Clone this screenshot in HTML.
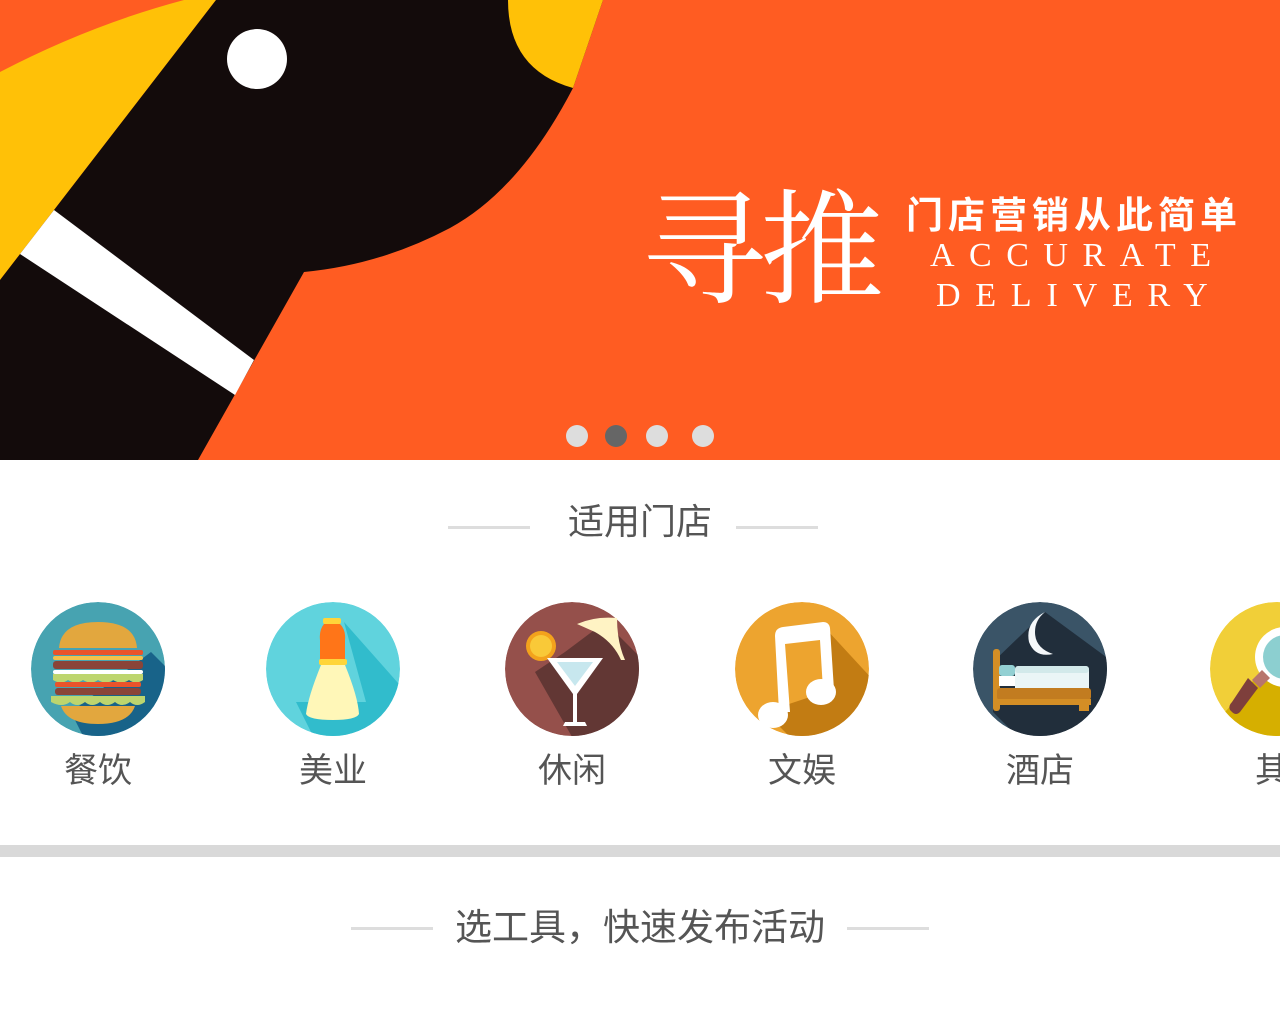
<!DOCTYPE html>
<html><head><meta charset="utf-8"><style>
*{margin:0;padding:0;box-sizing:border-box}
body{width:1280px;height:1024px;background:#fff;position:relative;overflow:hidden;font-family:"Liberation Sans","Noto Sans CJK SC",sans-serif}
.abs{position:absolute}
.t{position:absolute;white-space:nowrap;color:#fff}
.title{position:absolute;left:0;width:1280px;text-align:center;color:#555;font-size:36px;line-height:40px}
.line{position:absolute;height:3px;background:#ddd}
.lbl{position:absolute;top:751px;width:160px;text-align:center;font-size:34px;color:#555;line-height:40px}
</style></head><body>
<svg class="abs" style="left:0;top:0" width="1280" height="460" viewBox="0 0 1280 460">
<rect width="1280" height="460" fill="#FF5C22"/>
<path d="M0,72 Q90,25 184,0 L216,0 L0,280 Z" fill="#FFC107"/>
<path d="M216,0 L603,0 L573,88 Q520,190 450,228 Q380,265 304,272 L198,460 L0,460 L0,280 Z" fill="#130B0B"/>
<path d="M508,0 Q508,70 573,88 L603,0 Z" fill="#FFC107"/>
<path d="M54,210 L254,360 L235,395 L20,254 Z" fill="#fff"/>
<ellipse cx="257" cy="59" rx="30" ry="30" fill="#fff"/>
<circle cx="577" cy="436" r="11" fill="#ddd"/>
<circle cx="616" cy="436" r="11" fill="#666"/>
<circle cx="657" cy="436" r="11" fill="#ddd"/>
<circle cx="703" cy="436" r="11" fill="#ddd"/>
</svg>
<div class="t" style="left:642px;top:170px;font-size:124px;line-height:140px;font-family:'Noto Serif CJK SC',serif;letter-spacing:-6px">寻推</div>
<div class="t" style="left:906px;top:190px;font-size:37px;line-height:44px;font-weight:bold;letter-spacing:5px;font-family:'Noto Sans CJK SC',sans-serif">门店营销从此简单</div>
<div class="t" style="left:930px;top:236px;font-size:34px;line-height:40px;font-family:'Liberation Serif',serif;letter-spacing:14.5px">ACCURATE</div>
<div class="t" style="left:936px;top:276px;font-size:34px;line-height:40px;font-family:'Liberation Serif',serif;letter-spacing:14.8px">DELIVERY</div>

<div class="line" style="left:448px;top:526px;width:82px"></div>
<div class="line" style="left:736px;top:526px;width:82px"></div>
<div class="title" style="top:502px">适用门店</div>

<svg class="abs" style="left:31px;top:602px" width="134" height="134" viewBox="0 0 134 134">
<defs><clipPath id="c1"><circle cx="67" cy="67" r="67"/></clipPath></defs>
<g clip-path="url(#c1)"><circle cx="67" cy="67" r="67" fill="#47A3B1"/>
<path d="M120,50 L160,90 L110,150 L60,150 L40,110 Z" fill="#186389"/></g>
<path d="M28,46 Q30,20 67,20 Q104,20 106,46 Z" fill="#E2A73E"/>
<rect x="22" y="48" width="90" height="5" rx="2" fill="#E9532B"/>
<rect x="22" y="54" width="90" height="4" rx="2" fill="#F4C04A"/>
<rect x="22" y="59" width="90" height="8" rx="3" fill="#8A4438"/>
<rect x="22" y="68" width="90" height="4" rx="2" fill="#fff"/>
<path d="M22,72 H112 V78 Q105,83 98,78 Q90,83 82,78 Q75,83 67,78 Q60,83 52,78 Q45,83 37,78 Q30,83 22,78 Z" fill="#BDD56E"/>
<rect x="24" y="80" width="86" height="5" rx="2" fill="#E9532B"/>
<rect x="24" y="86" width="86" height="7" rx="3" fill="#8A4438"/>
<path d="M20,94 H114 V100 Q106,106 99,100 Q91,106 84,100 Q76,106 69,100 Q61,106 54,100 Q46,106 39,100 Q31,106 20,100 Z" fill="#BDD56E"/>
<path d="M30,104 H104 Q98,122 67,122 Q36,122 30,104 Z" fill="#E2A73E"/>
</svg>
<svg class="abs" style="left:266px;top:602px" width="134" height="134" viewBox="0 0 134 134">
<defs><clipPath id="c2"><circle cx="67" cy="67" r="67"/></clipPath></defs>
<g clip-path="url(#c2)"><circle cx="67" cy="67" r="67" fill="#60D3DD"/>
<path d="M78,20 L140,90 L100,150 L50,140 L30,100 L100,100 Z" fill="#31BCCC"/></g>
<rect x="57" y="16" width="18" height="6" rx="2" fill="#FFD53A"/>
<path d="M58,22 H74 Q80,28 79,38 V58 H54 V38 Q53,28 58,22 Z" fill="#FF7518"/>
<rect x="53" y="57" width="28" height="6" rx="2" fill="#FFD53A"/>
<path d="M55,63 H79 Q92,95 93,112 Q90,118 67,118 Q43,118 40,112 Q42,95 55,63 Z" fill="#FFF7B8"/>
</svg>
<svg class="abs" style="left:505px;top:602px" width="134" height="134" viewBox="0 0 134 134">
<defs><clipPath id="c3"><circle cx="67" cy="67" r="67"/></clipPath></defs>
<g clip-path="url(#c3)"><circle cx="67" cy="67" r="67" fill="#95504B"/>
<path d="M100,20 L150,70 L120,150 L70,140 L30,70 L60,50 Z" fill="#623734"/></g>
<circle cx="36" cy="44" r="15" fill="#F3A21C"/><circle cx="36" cy="44" r="11" fill="#F9C938"/>
<path d="M72,22 Q90,14 112,16 Q112,40 120,58 L116,58 Q108,40 90,30 Z" fill="#FFF3C4"/>
<path d="M42,56 H98 L72,92 V120 H80 L82,124 H58 L60,120 H68 V92 Z" fill="#fff"/>
<path d="M52,60 H88 L70,84 Z" fill="#C7E7EE"/>
</svg>
<svg class="abs" style="left:735px;top:602px" width="134" height="134" viewBox="0 0 134 134">
<defs><clipPath id="c4"><circle cx="67" cy="67" r="67"/></clipPath></defs>
<g clip-path="url(#c4)"><circle cx="67" cy="67" r="67" fill="#EDA42F"/>
<path d="M92,28 L140,80 L110,150 L60,140 L30,110 L90,90 Z" fill="#C27C13"/></g>
<path d="M40,34 Q40,26 48,25 L88,20 Q94,20 95,26 L99,88 L88,88 L85,38 L50,42 L55,110 L44,110 L40,34 Z" fill="#fff"/>
<ellipse cx="38" cy="113" rx="15" ry="13" fill="#fff"/>
<ellipse cx="86" cy="90" rx="15" ry="13" fill="#fff"/>
</svg>
<svg class="abs" style="left:973px;top:602px" width="134" height="134" viewBox="0 0 134 134">
<defs><clipPath id="c5"><circle cx="67" cy="67" r="67"/></clipPath></defs>
<g clip-path="url(#c5)"><circle cx="67" cy="67" r="67" fill="#3A5467"/>
<path d="M72,10 L140,60 L130,150 L60,150 L20,110 L20,60 Z" fill="#212E3B"/></g>
<path d="M72,10 Q52,20 56,40 Q62,56 80,52 Q62,46 62,30 Q62,18 72,10 Z" fill="#F5F8FA"/>
<rect x="20" y="47" width="7" height="62" rx="3" fill="#D48E25"/>
<rect x="26" y="63" width="16" height="11" rx="3" fill="#93D0D3"/>
<rect x="26" y="74" width="16" height="10" fill="#fff"/>
<rect x="42" y="64" width="74" height="28" rx="4" fill="#EAF5F6"/>
<rect x="42" y="64" width="74" height="7" rx="3" fill="#D2E9EA"/>
<rect x="24" y="86" width="94" height="12" rx="3" fill="#C27C20"/>
<rect x="24" y="97" width="94" height="6" fill="#D48E25"/>
<rect x="106" y="97" width="10" height="12" fill="#D48E25"/>
</svg>
<svg class="abs" style="left:1210px;top:602px" width="70" height="134" viewBox="0 0 70 134">
<defs><clipPath id="c6"><circle cx="67" cy="67" r="67"/></clipPath></defs>
<g clip-path="url(#c6)"><circle cx="67" cy="67" r="67" fill="#F1CF38"/>
<path d="M60,60 L90,80 L80,150 L30,150 L15,110 Z" fill="#D6AF00"/>
<circle cx="75" cy="55" r="30" fill="#fff"/><circle cx="75" cy="55" r="22" fill="#8CCFD0"/>
<path d="M52,68 L60,76 L50,86 L42,78 Z" fill="#B8756C"/>
<path d="M38,76 L48,86 L30,110 Q26,114 22,110 L20,108 Q18,104 22,100 Z" fill="#7E3F3C"/></g>
</svg>

<div class="lbl" style="left:18px">餐饮</div>
<div class="lbl" style="left:253px">美业</div>
<div class="lbl" style="left:492px">休闲</div>
<div class="lbl" style="left:722px">文娱</div>
<div class="lbl" style="left:960px">酒店</div>
<div class="lbl" style="left:1209px">其他</div>

<div class="abs" style="left:0;top:845px;width:1280px;height:12px;background:#d9d9d9"></div>

<div class="line" style="left:351px;top:927px;width:82px"></div>
<div class="line" style="left:847px;top:927px;width:82px"></div>
<div class="title" style="top:908px;font-size:37px">选工具，快速发布活动</div>
</body></html>
